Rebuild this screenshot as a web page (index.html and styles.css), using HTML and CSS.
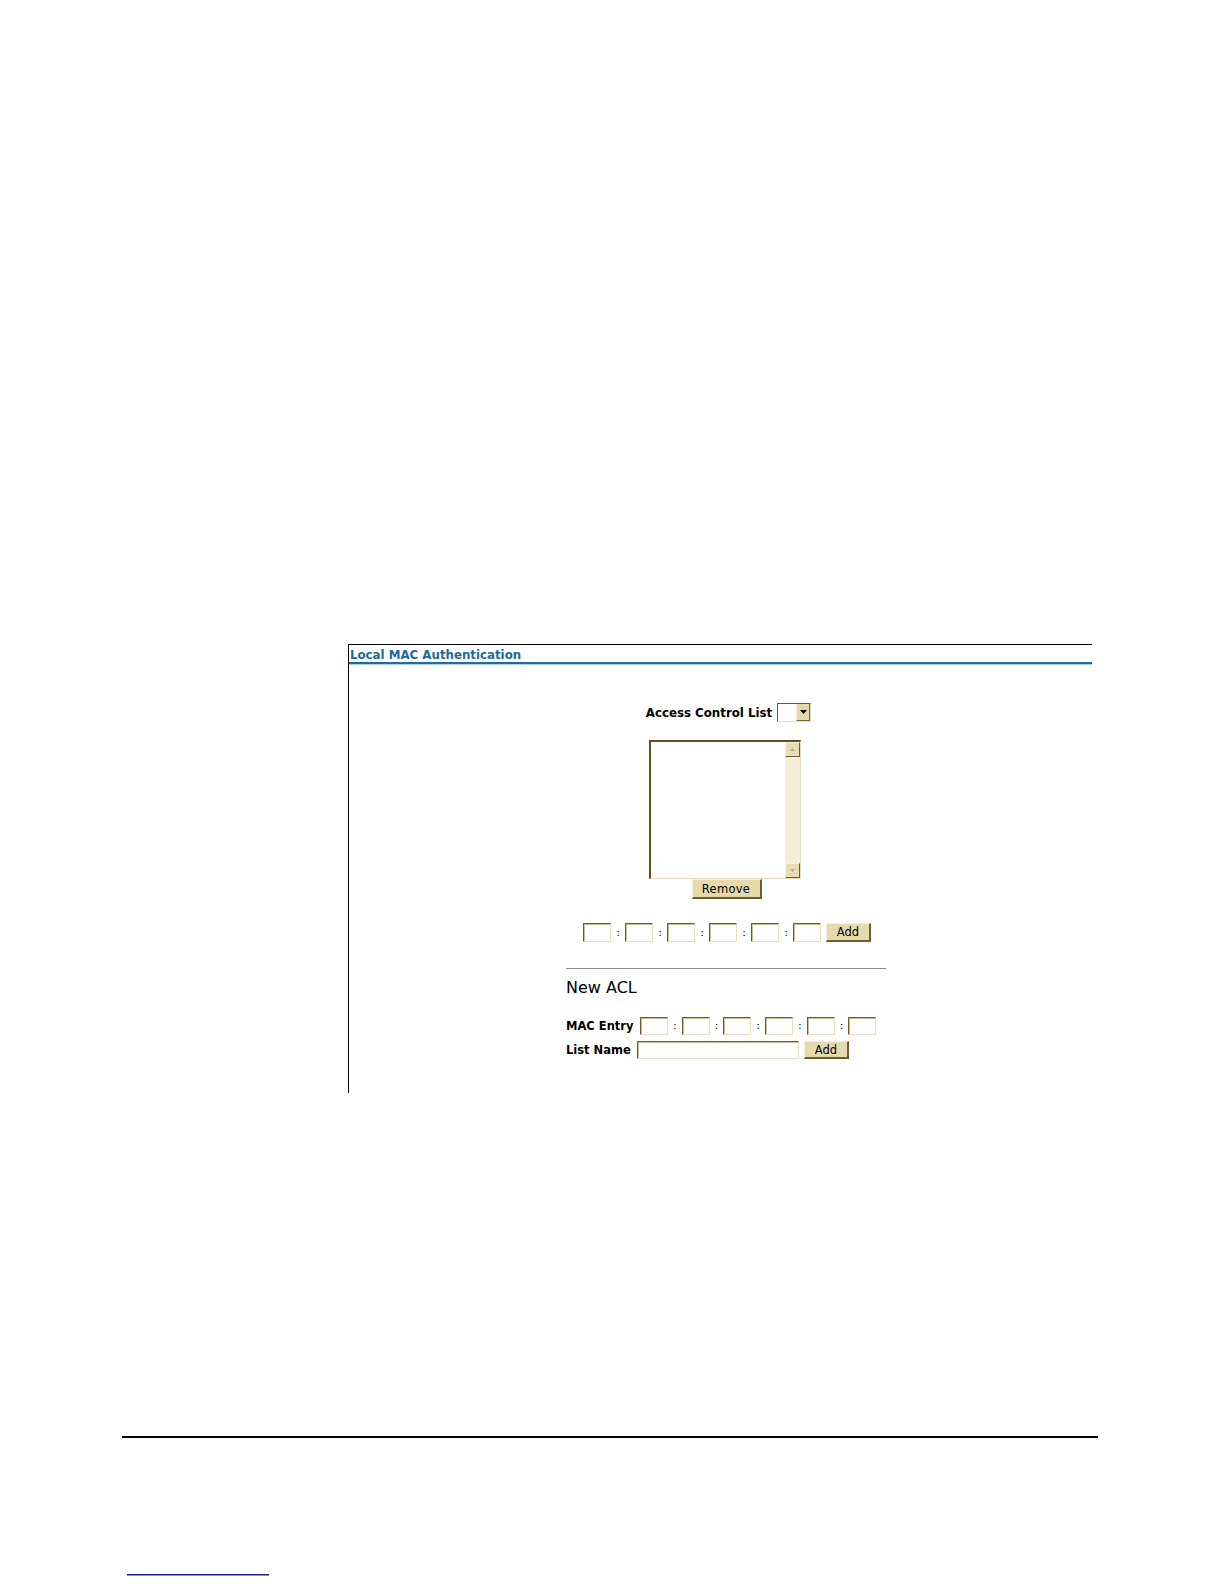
FILE: index.html
```html
<!DOCTYPE html>
<html>
<head>
<meta charset="utf-8">
<title>Local MAC Authentication</title>
<link rel="stylesheet" href="styles.css">
</head>
<body>
<div class="page">
  <div class="panel">
    <div class="panel-title">Local MAC Authentication</div>
    <div class="content">
      <div class="acl-row">
        <span class="label">Access Control List</span>
        <span class="select"><span class="select-value"></span><span class="select-btn"><svg width="7" height="4" viewBox="0 0 7 4"><path d="M0 0h7L3.5 4z" fill="#000"/></svg></span></span>
      </div>
      <div class="listbox">
        <div class="list-area"></div>
        <div class="scrollbar">
          <span class="sb-btn"><svg width="5" height="3" viewBox="0 0 5 3"><path d="M0 3h5L2.5 0z" fill="#b8ad8a"/></svg></span>
          <span class="sb-track"></span>
          <span class="sb-btn"><svg width="5" height="3" viewBox="0 0 5 3"><path d="M0 0h5L2.5 3z" fill="#b8ad8a"/></svg></span>
        </div>
      </div>
      <button class="btn btn-remove">Remove</button>
      <div class="mac-row">
        <span class="field mac"></span><span class="colon">:</span>
        <span class="field mac"></span><span class="colon">:</span>
        <span class="field mac"></span><span class="colon">:</span>
        <span class="field mac"></span><span class="colon">:</span>
        <span class="field mac"></span><span class="colon">:</span>
        <span class="field mac"></span>
        <button class="btn btn-add">Add</button>
      </div>
      <div class="new-acl">
        <div class="rule"></div>
        <div class="new-title">New ACL</div>
        <div class="entry-row">
          <span class="label label-entry">MAC Entry</span>
          <span class="field mac2"></span><span class="colon2">:</span>
          <span class="field mac2"></span><span class="colon2">:</span>
          <span class="field mac2"></span><span class="colon2">:</span>
          <span class="field mac2"></span><span class="colon2">:</span>
          <span class="field mac2"></span><span class="colon2">:</span>
          <span class="field mac2"></span>
        </div>
        <div class="name-row">
          <span class="label label-name">List Name</span>
          <span class="field name-field"></span>
          <button class="btn btn-add2">Add</button>
        </div>
      </div>
    </div>
  </div>
  <div class="footer-rule"></div>
  <div class="link-line"></div>
</div>
</body>
</html>
```
FILE: styles.css
```css
html, body {
  margin: 0;
  padding: 0;
  background: #fff;
}
.page {
  width: 1224px;
  height: 1584px;
  overflow: hidden;
  font-family: "DejaVu Sans", Verdana, sans-serif;
  color: #000;
}
.panel {
  margin: 644px 0 0 348px;
  width: 744px;
  height: 449px;
  border-top: 1px solid #000;
  border-left: 1px solid #000;
  box-sizing: border-box;
}
.panel-title {
  padding: 3px 0 0 1px;
  height: 14px;
  line-height: 14px;
  font-size: 11.8px;
  font-weight: bold;
  color: #1d6a9a;
  border-bottom: 2px solid #2a6993;
  box-shadow: 0 1px 0 #a9d3ea;
}
.content {
  display: flex;
  flex-direction: column;
  align-items: center;
}
.label {
  font-size: 11.5px;
  font-weight: bold;
  white-space: nowrap;
}
.acl-row {
  margin-top: 39px;
  height: 19px;
  display: flex;
  align-items: center;
  gap: 5px;
  margin-left: 16px;
}
.acl-row .label {
  font-size: 11.8px;
}
.select {
  display: flex;
  width: 34px;
  height: 19px;
  box-sizing: border-box;
  border-top: 1px solid #6c5c2c;
  border-left: 1px solid #6c5c2c;
  border-right: 1px solid #e8dfc2;
  border-bottom: 1px solid #e8dfc2;
  background: #fff;
}
.select-value {
  flex: 1;
}
.select-btn {
  width: 14px;
  background: #e6d9ae;
  border-left: 1px solid #f7f1dc;
  border-right: 1px solid #776633;
  border-bottom: 1px solid #776633;
  box-sizing: border-box;
  display: flex;
  align-items: center;
  justify-content: center;
}
.listbox {
  margin-top: 18px;
  width: 152px;
  height: 139px;
  box-sizing: border-box;
  border-top: 2px solid #5e4f24;
  border-left: 2px solid #5e4f24;
  border-right: 1px solid #e6ddbc;
  border-bottom: 1px solid #e6ddbc;
  display: flex;
  background: #fff;
  margin-left: 8px;
}
.list-area {
  flex: 1;
}
.scrollbar {
  width: 15px;
  display: flex;
  flex-direction: column;
  background: #f4efdb;
}
.sb-btn {
  height: 15px;
  box-sizing: border-box;
  background: #e8dcb4;
  border-top: 1px solid #f8f3e0;
  border-left: 1px solid #f8f3e0;
  border-right: 1px solid #6e5e2e;
  border-bottom: 1px solid #6e5e2e;
  display: flex;
  align-items: center;
  justify-content: center;
}
.sb-track {
  flex: 1;
}
.btn {
  font-family: "DejaVu Sans", Verdana, sans-serif;
  font-size: 11.5px;
  color: #000;
  background: #e6d9ae;
  border-top: 1px solid #f6f0da;
  border-left: 1px solid #f6f0da;
  border-right: 2px solid #6e5e2e;
  border-bottom: 2px solid #6e5e2e;
  padding: 0;
  margin: 0;
  box-sizing: border-box;
  line-height: 14px;
}
.btn-remove {
  width: 70px;
  height: 20px;
  margin-left: 12px;
  letter-spacing: 0.3px;
}
.mac-row {
  margin-top: 24px;
  display: flex;
  align-items: center;
  height: 19px;
  margin-left: 13px;
}
.field {
  display: block;
  box-sizing: border-box;
  background: #fff;
  border-top: 1px solid #6c5c2c;
  border-left: 1px solid #6c5c2c;
  border-right: 1px solid #e8dfc2;
  border-bottom: 1px solid #e8dfc2;
  box-shadow: inset 1px 1px 0 #c9bd93;
}
.mac {
  width: 28px;
  height: 19px;
}
.colon, .colon2 {
  font-size: 11px;
  font-weight: normal;
  text-align: center;
  line-height: 14px;
}
.colon {
  width: 14px;
}
.btn-add {
  width: 45px;
  height: 19px;
  margin-left: 5px;
}
.new-acl {
  margin-top: 26px;
  width: 320px;
  margin-left: 11px;
}
.rule {
  height: 1px;
  background: #8a8a8a;
}
.new-title {
  margin-top: 10px;
  font-size: 16px;
  line-height: 18px;
  height: 18px;
}
.entry-row {
  margin-top: 20px;
  display: flex;
  align-items: center;
  height: 18px;
}
.label-entry {
  width: 74px;
}
.mac2 {
  width: 28px;
  height: 18px;
}
.colon2 {
  width: 13.7px;
}
.name-row {
  margin-top: 6px;
  display: flex;
  align-items: center;
  height: 18px;
}
.label-name {
  width: 71px;
}
.name-field {
  width: 162px;
  height: 18px;
}
.btn-add2 {
  width: 45px;
  height: 18px;
  margin-left: 5px;
}
.footer-rule {
  margin: 343px 0 0 122px;
  width: 976px;
  height: 2px;
  background: #000;
}
.link-line {
  margin: 136px 0 0 127px;
  width: 142px;
  height: 1px;
  background: #1b1f8e;
  box-shadow: 0 1px 0 #8a8ec8;
}
```
